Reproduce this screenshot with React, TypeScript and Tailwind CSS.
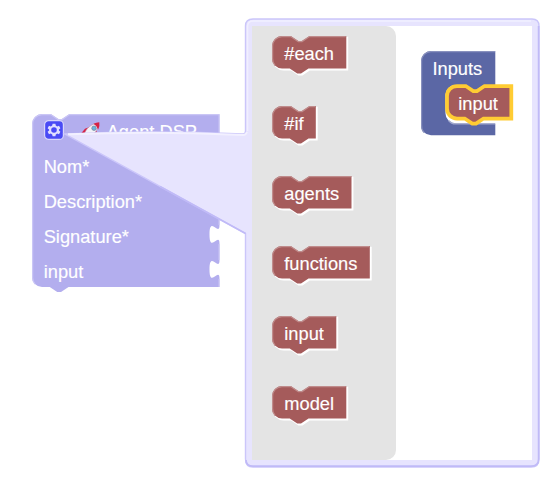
const notch = 'l7.5 5h3.75l7.5 -5';
const tab = 'l-7.5 5h-3.75l-7.5 -5';

function Label({ children }: { children: string }) {
  return (
    <span className="relative block whitespace-nowrap font-['Liberation_Sans',Arial,sans-serif] text-[18.25px] leading-5 text-white [-webkit-text-stroke:0.15px_white]">
      {children}
    </span>
  );
}

function stackPath(width: number) {
  return `M0 10A10 10 0 0 1 10 0H18.75${notch}H${width}V32.5H36.5${tab}H10A10 10 0 0 1 0 22.5Z`;
}

function ToolBlock({ label, width }: { label: string; width: number }) {
  const d = stackPath(width);
  return (
    <li className="relative h-8 pl-3 pt-2">
      <svg className="absolute inset-0 overflow-visible" width={width} height={38}>
        <path d={d} fill="#fff" stroke="#fff" strokeWidth="1.2" transform="translate(1.3 1.3)" />
        <path d={d} fill="#a55b5b" />
        <path d={`M3 29.5A10 10 0 0 1 .6 22.5V10A9.4 9.4 0 0 1 10 .6H18.75${notch}H${width - 0.5}`} fill="none" stroke="#c08c8c" strokeWidth="1.25" />
      </svg>
      <Label>{label}</Label>
    </li>
  );
}

const tools = [
  { label: '#each', width: 74.3 },
  { label: '#if', width: 43.8 },
  { label: 'agents', width: 79.5 },
  { label: 'functions', width: 97.8 },
  { label: 'input', width: 64.3 },
  { label: 'model', width: 74.3 },
];

function GearIcon() {
  return (
    <svg className="relative -mt-0.5" width="20" height="20" viewBox="0 0 20 20">
      <rect x=".6" y=".6" width="18.8" height="18.8" rx="4" fill="#494af5" stroke="#d7d5fb" strokeWidth="1.2" />
      <g transform="translate(10 10)">
        <path
          d="M-1.4-6.2h2.8l.4 1.8 1.4.8 1.8-.6 1.4 2.4-1.5 1.3v1l1.5 1.3-1.4 2.4-1.8-.6-1.4.8-.4 1.8h-2.8l-.4-1.8-1.4-.8-1.8.6-1.4-2.4 1.5-1.3v-1l-1.5-1.3 1.4-2.4 1.8.6 1.4-.8z"
          fill="#e0dfff"
        />
        <circle r="2.8" fill="#494af5" />
      </g>
    </svg>
  );
}

function RocketIcon() {
  return (
    <svg className="relative" width="20" height="18" viewBox="0 0 20 18">
      <path d="M8.500 5L4 6.800 0 11.500l6-1zM12 11l-2 6 4-2 2-6z" fill="#d52245" />
      <path d="M3 12.500C5.500 6 10 2 17.500 1c-.2 7-4 11-11 15z" fill="#f3f3f8" stroke="#c88aa2" strokeWidth=".6" />
      <path d="M12.500 1.800Q15.500 .3 18.300.3 19 4 17.200 7.500 16 4 12.500 1.800z" fill="#d52245" />
      <circle cx="13" cy="6.200" r="2.200" fill="#65b5e3" stroke="#7d899a" strokeWidth=".8" />
    </svg>
  );
}

function AgentBlock() {
  return (
    <div className="absolute left-[31.7px] top-[114px] h-[173px] w-[188px] pl-3 pt-2">
      <svg className="absolute inset-0 overflow-visible" width="190" height="180">
        <path
          d={`M0 10A10 10 0 0 1 10 0H18.75${notch}H187.5V111c0 12.5-10-10-10 9.4s10-3.1 10 9.4V146c0 12.5-10-10-10 9.4s10-3.1 10 9.4V173H36.5${tab}H10A10 10 0 0 1 0 163Z`}
          fill="#b3aeee"
        />
        <path d={`M3 170A10 10 0 0 1 .6 163V10A9.4 9.4 0 0 1 10 .6H18.75${notch}H187`} fill="none" stroke="#cac6f5" strokeWidth="1.25" />
        <path d="M187 1V111M187 130V146M187 165V173" stroke="#cac6f5" strokeWidth="1" />
      </svg>
      <div className="flex flex-col gap-[15px]">
        <div className="flex h-5 items-start">
          <GearIcon />
          <div className="ml-[17px] mr-[6px]">
            <RocketIcon />
          </div>
          <Label>Agent DSP</Label>
        </div>
        <Label>Nom*</Label>
        <Label>Description*</Label>
        <Label>Signature*</Label>
        <Label>input</Label>
      </div>
    </div>
  );
}

function BubbleShape() {
  const d = 'M253 19H532Q539 19 539 26V459Q539 467 531 467H253Q245.5 467 245.5 459V233.5L65 134Q155 130 243 134Q245.5 134 245.5 131V26Q245.5 19 253 19Z';
  return (
    <svg className="absolute inset-0" width="557" height="480">
      <path d={d} fill="#e7e4fe" stroke="#cbc6fa" strokeWidth="1.4" />
      <path d="M247.5 131V26Q248 21 253 21H531" fill="none" stroke="#f1efff" strokeWidth="1.5" />
      <path d="M68 134.2Q155 130.8 243 135Q246 135 247 132" fill="none" stroke="#f2f0ff" strokeWidth="2" />
      <path d="M538.6 26V459Q538.6 466.2 531 466.2H253Q246 466 246 460M245.5 233.5L160 186.5" fill="none" stroke="#c0baf7" strokeWidth="1.7" />
    </svg>
  );
}

function SelectedInput() {
  return (
    <div className="relative h-8 pl-[11.5px] pt-2">
      <svg className="absolute inset-0 overflow-visible" width="65" height="38">
        <path d={stackPath(64.3)} fill="#a55b5b" stroke="#fc3" strokeWidth="3.75" />
      </svg>
      <Label>input</Label>
    </div>
  );
}

function InputsBlock() {
  return (
    <div className="absolute left-[420.5px] top-[51px] h-[84px] w-[74px] pt-2">
      <svg className="absolute inset-0 overflow-visible" width="94" height="85">
        <path
          d={`M0 10A10 10 0 0 1 10 0H74.3V34H62.75${tab}H34.5A10 10 0 0 0 24.5 44V62.5A10 10 0 0 0 34.5 72.5H74.3V84.3H10A10 10 0 0 1 0 74.3Z`}
          fill="#5b67a5"
        />
        <path d="M3 81.5A10 10 0 0 1 .6 74V10A9.4 9.4 0 0 1 10 .6H74" fill="none" stroke="#8991be" strokeWidth="1.2" />
        <path d="M27.5 69.5A10 10 0 0 0 34.5 73H74" fill="none" stroke="#a3aace" strokeWidth="1.2" />
      </svg>
      <div className="pl-3">
        <Label>Inputs</Label>
      </div>
      <div className="pl-[26.3px] pt-[7px]">
        <SelectedInput />
      </div>
    </div>
  );
}

export default function App() {
  return (
    <main className="relative h-[480px] w-[557px] overflow-hidden bg-white">
      <AgentBlock />
      <BubbleShape />
      <div className="flex pl-[252px] pt-[26px]">
        <section className="relative flex h-[434px] w-[280px] bg-white">
          <ul className="flex w-[143.5px] flex-col gap-[38px] rounded-r-[10px] bg-[#e4e4e4] pl-[20.3px] pt-[10.2px]">
            {tools.map((tool) => (
              <ToolBlock key={tool.label} {...tool} />
            ))}
          </ul>
        </section>
      </div>
      <InputsBlock />
    </main>
  );
}
